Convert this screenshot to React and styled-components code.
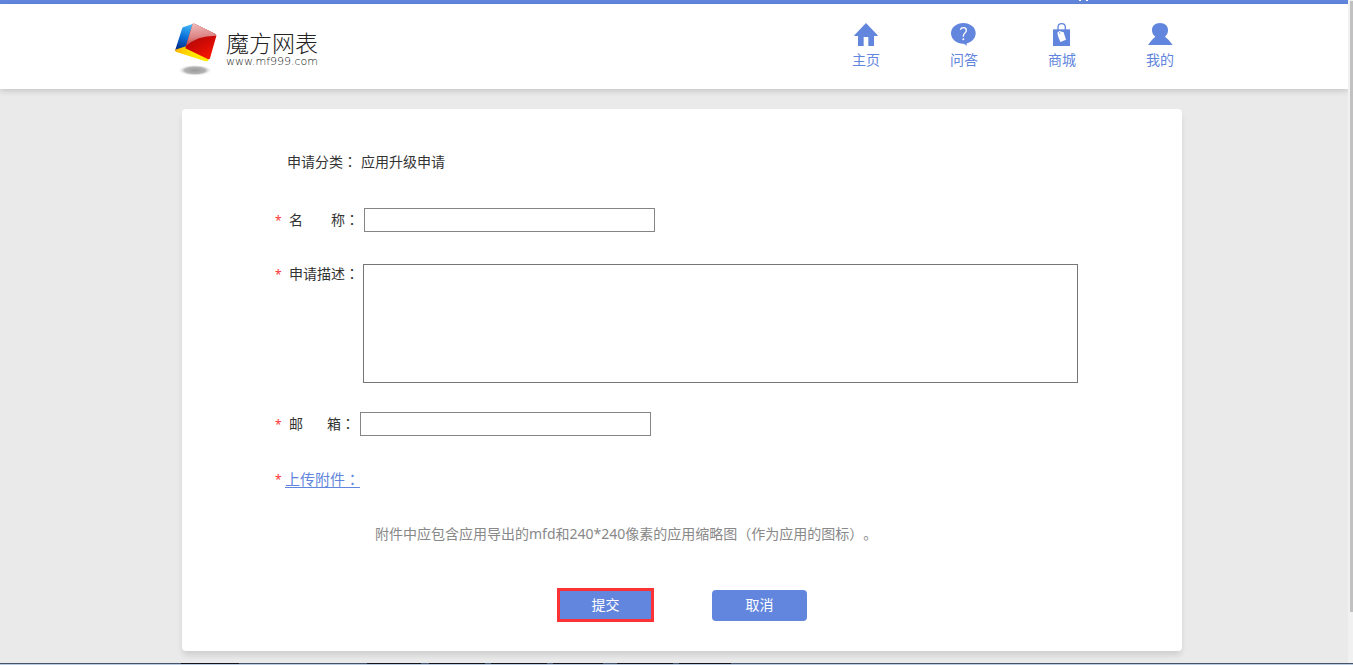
import React from "react"
import styled, { createGlobalStyle } from "styled-components"

const GlobalStyle = createGlobalStyle`
  :root {
    --clr-primary: #6286dd;
    --clr-page: #eaeaea;
    --clr-text: #333;
    --clr-muted: #888;
    --clr-danger: #fc3335;
  }

  *, *::before, *::after {
    box-sizing: border-box;
  }

  body {
    margin: 0;
    background: var(--clr-page);
    color: var(--clr-text);
    font-family: "Noto Sans", "Noto Sans CJK SC", sans-serif;
    font-size: 14px;
    line-height: 20px;
    text-spacing-trim: space-all;
  }
`

const Window = styled.div`
  display: flex;
  flex-direction: column;
  height: 100vh;
  overflow: hidden;
`

const Viewport = styled.div`
  flex: 1;
  display: flex;
  min-height: 0;
`

const Page = styled.div`
  flex: 1;
  min-width: 0;
  overflow: hidden;
`

const ScrollTrack = styled.div`
  width: 5px;
  padding: 1px 0 51px 2px;
  background: #f1f1f1;
`

const ScrollThumb = styled.div`
  height: 100%;
  background: #c1c1c1;
`

const TopBar = styled.div`
  height: 4px;
  background: var(--clr-primary);
`

const TopInner = styled.div`
  display: flex;
  justify-content: flex-end;
  max-width: 1000px;
  margin: 0 auto;
  padding-right: 85px;
`

const Header = styled.header`
  background: #fff;
  box-shadow: 0 2px 6px rgba(0, 0, 0, 0.16);
`

const HeaderInner = styled.div`
  display: flex;
  justify-content: space-between;
  align-items: flex-start;
  max-width: 1000px;
  height: 85px;
  margin: 0 auto;
  padding-top: 19px;
`

const Brand = styled.a`
  display: flex;
  gap: 7px;
  color: #222;
  text-decoration: none;
`

const BrandText = styled.span`
  display: flex;
  flex-direction: column;
  gap: 2px;
  padding-top: 7px;
`

const BrandName = styled.span`
  font-family: "Noto Sans CJK SC", sans-serif;
  font-size: 23px;
  font-weight: 300;
  line-height: 24px;
`

const BrandUrl = styled.span`
  font-family: "DejaVu Sans", sans-serif;
  font-size: 11px;
  font-weight: 200;
  line-height: 12px;
  color: #222;
`

const Nav = styled.nav`
  display: flex;
  gap: 70px;
`

const NavLink = styled.a`
  display: flex;
  flex-direction: column;
  gap: 3px;
  color: var(--clr-primary);
  text-decoration: none;

  svg {
    width: 28px;
    height: 24px;
  }
`

const Main = styled.main`
  padding: 20px 0 20px 16px;
`

const Card = styled.form`
  max-width: 1000px;
  margin: 0 auto;
  padding: 43px 93px 29px;
  background: #fff;
  border-radius: 4px;
  box-shadow: 0 5px 6px -1px rgba(0, 0, 0, 0.12);
`

const Row = styled.div`
  display: flex;
  align-items: ${({ $top }) => ($top ? "flex-start" : "center")};
  margin-top: ${({ $gap }) => $gap || 0}px;
`

const Required = styled.span`
  width: ${({ $narrow }) => ($narrow ? 10 : 14)}px;
  padding-top: 2px;
  font-size: 12px;
  line-height: 18px;
  color: var(--clr-danger);
`

const Label = styled.label`
  display: flex;
  justify-content: space-between;
  width: ${({ $width }) => $width}px;
  margin-right: ${({ $space }) => $space || 0}px;
`

// Traditional Chinese glyphs keep the colon and brackets centred
const Mark = styled.span`
  font-family: "Noto Sans CJK TC", sans-serif;
  line-height: 1;
`

const Category = styled.p`
  display: flex;
  gap: 4px;
  margin: 0;
  padding-left: 12px;
`

const TextInput = styled.input`
  width: 291px;
  height: 24px;
  padding: 1px 4px;
  border: 1px solid #858585;
  font: inherit;
`

const TextArea = styled.textarea`
  flex: 1;
  max-width: 715px;
  height: 119px;
  padding: 2px 4px;
  border: 1px solid #767676;
  font: inherit;
  resize: none;
`

const UploadLink = styled.a`
  font-size: 15px;
  color: var(--clr-primary);
  text-underline-offset: 2px;
`

const Hint = styled.p`
  margin: 35px 0 0;
  padding-left: 100px;
  color: var(--clr-muted);
`

const Actions = styled.div`
  display: flex;
  justify-content: center;
  align-items: center;
  gap: 58px;
  margin-top: 44px;
`

const Button = styled.button`
  width: ${({ $marked }) => ($marked ? 97 : 95)}px;
  height: ${({ $marked }) => ($marked ? 34 : 31)}px;
  padding: 0;
  border: ${({ $marked }) => ($marked ? "3px solid var(--clr-danger)" : "0")};
  border-radius: ${({ $marked }) => ($marked ? 0 : 4)}px;
  background: var(--clr-primary);
  color: #fff;
  font: inherit;
  cursor: pointer;
`

const Taskbar = styled.div`
  display: flex;
  gap: 4px;
  height: 2px;
  padding-left: 181px;
  border-top: 1px solid #46546a;
  background: #b9cbe0;
`

const TaskItem = styled.span`
  width: ${({ $width }) => $width}px;
  height: 1px;
  margin-top: -1px;
  margin-left: ${({ $after }) => $after || 0}px;
  background: #14161c;
`

const LogoMark = () => (
  <svg width="45" height="53" viewBox="0 0 135 159" aria-hidden="true">
    <defs>
      <linearGradient id="blue" x1="0.6" y1="0" x2="0.4" y2="1">
        <stop offset="0" stopColor="#3fb4f5" />
        <stop offset="0.5" stopColor="#0a6fd8" />
        <stop offset="1" stopColor="#052a86" />
      </linearGradient>
      <linearGradient id="red" x1="0.3" y1="0.2" x2="0.7" y2="1">
        <stop offset="0" stopColor="#a80c0c" />
        <stop offset="0.5" stopColor="#d00a05" />
        <stop offset="1" stopColor="#f81600" />
      </linearGradient>
      <linearGradient id="gloss" x1="0.3" y1="0" x2="0.4" y2="1">
        <stop offset="0" stopColor="#f0baba" />
        <stop offset="0.6" stopColor="#dc8484" />
        <stop offset="1" stopColor="#c23c3c" />
      </linearGradient>
      <linearGradient id="yellow" x1="0" y1="0" x2="1" y2="0">
        <stop offset="0" stopColor="#ffb400" />
        <stop offset="0.5" stopColor="#ffe600" />
        <stop offset="1" stopColor="#ffee00" />
      </linearGradient>
      <radialGradient id="shade">
        <stop offset="0" stopColor="#9a9a9a" />
        <stop offset="0.6" stopColor="#b4b4b4" />
        <stop offset="1" stopColor="#fff" stopOpacity="0" />
      </radialGradient>
    </defs>
    <ellipse cx="63" cy="142" rx="52" ry="17" fill="url(#shade)" />
    <path d="M24 17 Q25 13 29 12 L56 3 L37 76 L3 83 Z" fill="url(#blue)" />
    <path d="M3 80 L36 70 L108 102 L101 115 L92 114 L5 86 Z" fill="url(#yellow)" />
    <path d="M56 2 L62 2 L123 32 Q128 34 127 39 L108 106 Q106 110 101 108 L34 76 Z" fill="url(#red)" />
    <path d="M56 2 L62 2 L123 32 Q127 34 127 38 Q70 37 36 69 Z" fill="url(#gloss)" />
  </svg>
)

const HomeIcon = () => (
  <svg viewBox="0 0 84 72" fill="currentColor" aria-hidden="true">
    <path d="M42 0 L77 37 V39 H66 V69 H49 V42 H35 V69 H18 V39 H7 V37 Z" />
  </svg>
)

const AskIcon = () => (
  <svg viewBox="0 0 84 72" fill="currentColor" aria-hidden="true">
    <ellipse cx="40" cy="31" rx="37" ry="31" />
    <path d="M30 58 Q44 62 51 69 Q49 63 50 57 Z" />
    <path
      d="M31 20 Q33 14 40 14 Q49 14 49 22 Q49 27 44 31 Q40 34 40 41"
      fill="none"
      stroke="#fff"
      strokeWidth="4"
    />
    <circle cx="40" cy="49" r="3" fill="#fff" />
  </svg>
)

const ShopIcon = () => (
  <svg viewBox="0 0 84 72" fill="currentColor" aria-hidden="true">
    <path
      d="M30 24 V13 Q30 2 41 2 Q52 2 52 13 V24"
      fill="none"
      stroke="currentColor"
      strokeWidth="4"
    />
    <path d="M15 19 H66 V69 H15 Z" />
    <path d="M28 29 L34 24 L47 28 L54 50 L37 57 L30 39 Z" fill="#fff" />
    <circle cx="35" cy="30" r="2" />
  </svg>
)

const UserIcon = () => (
  <svg viewBox="0 0 84 72" fill="currentColor" aria-hidden="true">
    <path d="M42 0 C57 0 66 9 66 21 C66 30 63 36 57 41 Q70 50 80 66 H6 Q16 50 28 41 C21 36 18 30 18 21 C18 9 27 0 42 0 Z" />
  </svg>
)

const navItems = [
  { text: "主页", Icon: HomeIcon },
  { text: "问答", Icon: AskIcon },
  { text: "商城", Icon: ShopIcon },
  { text: "我的", Icon: UserIcon },
]

const App = () => {
  return (
    <Window>
      <GlobalStyle />
      <Viewport>
        <Page>
          <TopBar>
            <TopInner>
              <svg width="10" height="1" fill="#fff" aria-hidden="true">
                <rect x="0" width="2" height="1" />
                <rect x="7" width="2" height="1" />
              </svg>
            </TopInner>
          </TopBar>
          <Header>
            <HeaderInner>
              <Brand href="#">
                <LogoMark />
                <BrandText>
                  <BrandName>魔方网表</BrandName>
                  <BrandUrl>www.mf999.com</BrandUrl>
                </BrandText>
              </Brand>
              <Nav>
                {navItems.map(({ text, Icon }) => (
                  <NavLink href="#" key={text}>
                    <Icon />
                    {text}
                  </NavLink>
                ))}
              </Nav>
            </HeaderInner>
          </Header>
          <Main>
            <Card onSubmit={e => e.preventDefault()}>
              <Category>
                <span>
                  申请分类<Mark>：</Mark>
                </span>
                <span>应用升级申请</span>
              </Category>
              <Row $gap={36}>
                <Required>*</Required>
                <Label htmlFor="name" $width={70} $space={5}>
                  <span>名</span>
                  <span>
                    称<Mark>：</Mark>
                  </span>
                </Label>
                <TextInput id="name" type="text" />
              </Row>
              <Row $gap={32} $top>
                <Required>*</Required>
                <Label htmlFor="description" $width={70} $space={4}>
                  <span>
                    申请描述<Mark>：</Mark>
                  </span>
                </Label>
                <TextArea id="description" />
              </Row>
              <Row $gap={29}>
                <Required>*</Required>
                <Label htmlFor="email" $width={66} $space={5}>
                  <span>邮</span>
                  <span>
                    箱<Mark>：</Mark>
                  </span>
                </Label>
                <TextInput id="email" type="text" />
              </Row>
              <Row $gap={33}>
                <Required $narrow>*</Required>
                <UploadLink href="#">
                  上传附件<Mark>：</Mark>
                </UploadLink>
              </Row>
              <Hint>
                附件中应包含应用导出的mfd和240*240像素的应用缩略图<Mark>（</Mark>
                作为应用的图标<Mark>）</Mark>。
              </Hint>
              <Actions>
                <Button type="submit" $marked>
                  提交
                </Button>
                <Button type="button">取消</Button>
              </Actions>
            </Card>
          </Main>
        </Page>
        <ScrollTrack>
          <ScrollThumb />
        </ScrollTrack>
      </Viewport>
      <Taskbar>
        <TaskItem $width={58} />
        <TaskItem $width={54} $after={124} />
        <TaskItem $width={56} $after={4} />
        <TaskItem $width={56} $after={2} />
        <TaskItem $width={50} $after={2} />
        <TaskItem $width={56} $after={10} />
        <TaskItem $width={52} $after={2} />
      </Taskbar>
    </Window>
  )
}

export default App
